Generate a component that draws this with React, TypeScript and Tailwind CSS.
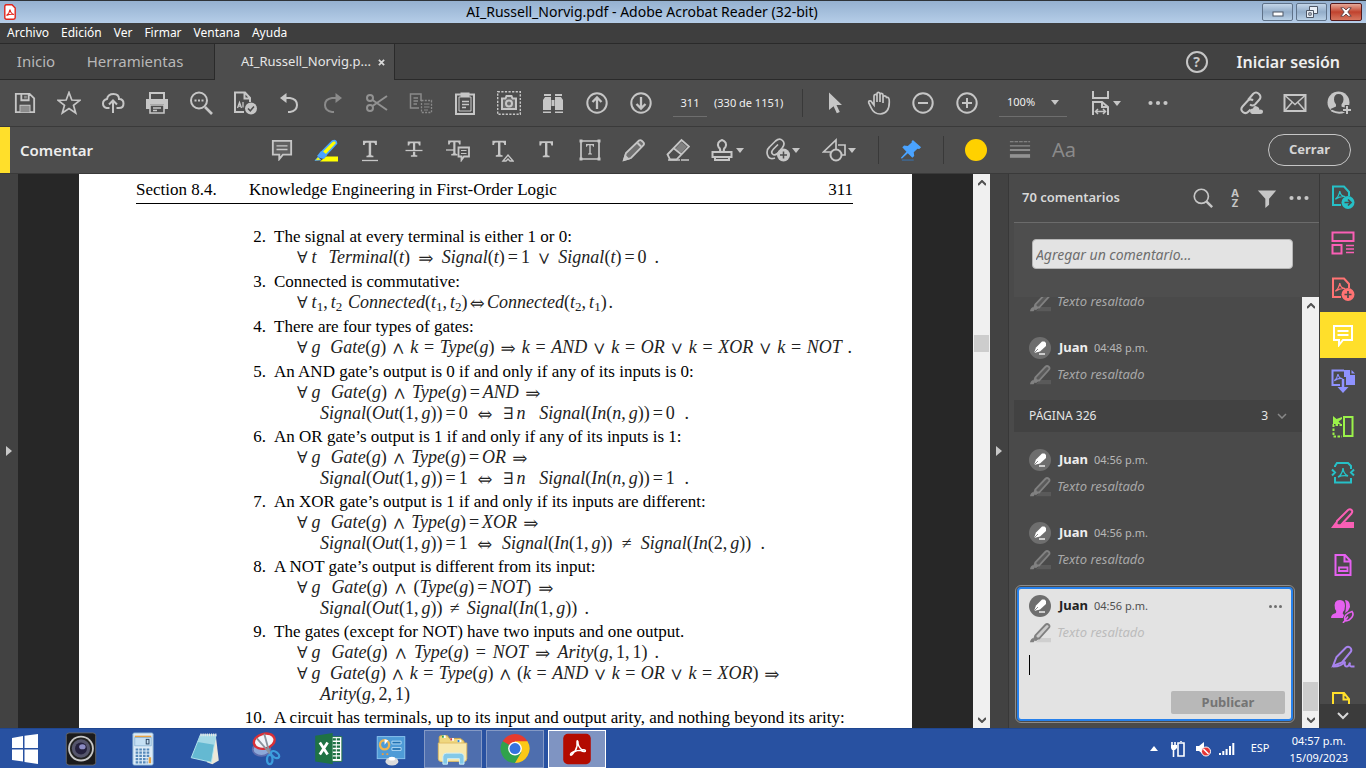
import React from "react";

type Kids = { children?: React.ReactNode };

function Ico({ children, className = "size-6" }: Kids & { className?: string }) {
  return (
    <svg viewBox="0 0 24 24" className={"shrink-0 " + className} fill="none" stroke="currentColor" strokeWidth="2" aria-hidden="true">
      {children}
    </svg>
  );
}

function Btn({ label, children, className = "w-11" }: Kids & { label: string; className?: string }) {
  return (
    <button type="button" aria-label={label} className={"flex h-9 shrink-0 items-center justify-center " + className}>
      {children}
    </button>
  );
}

function Caret() {
  return (
    <svg viewBox="0 0 8 5" className="h-[5px] w-2 shrink-0" aria-hidden="true">
      <path d="M0 0h8L4 5z" fill="#c6c6c6" />
    </svg>
  );
}

function Divider() {
  return <div className="h-7 w-px shrink-0 bg-[#393939]" />;
}

const glyphT = "M4 2h16v5h-2q0-2.800-2-2.800h-2.600V18q0 1.200 2.600 1.200V21h-8v-1.800q2.600 0 2.600-1.200V4.200H8q-2 0-2 2.800H4z";
const acroMark = "M7 17q4-3 5-9 1 6 6 6-5-1-11 3z";

function Highlighter({ base = "currentColor" }: { base?: string }) {
  return (
    <Ico className="size-[22px]">
      <path d="M7.500 22 12 17.500h12V22z" fill={base} stroke="none" />
      <path d="M7 14.500 18 3q1.700-1.700 3.500 0t0 3.500L11 18l-3.500-.2z" fill="#88888844" />
      <path d="m6 14.500 4.500 4L7.500 21l-3-2.500z" fill="currentColor" stroke="none" />
      <path d="M1 22q1-4 3.500-4.500l2 2.500L5 22z" fill="currentColor" stroke="none" />
    </Ico>
  );
}

function TitleBar() {
  return (
    <header className="flex h-[23px] shrink-0 items-center border-t border-[#2e3338] bg-linear-to-b from-[#95b1d0] to-[#b5cde8] px-1">
      <svg viewBox="0 0 12 16" className="h-4 w-3 shrink-0" aria-hidden="true">
        <path d="M1.500.8h6.500L11.200 4v9.500q0 1.700-1.700 1.700H2.500Q.8 15.200.8 13.500V2.500Q.8.8 2.500.8z" fill="#fff" stroke="#e1251b" strokeWidth="1.400" />
        <path d="M2.500 11.500q3-2 3.500-6 .5 4 4 5-3.500-.8-7.500 1z" fill="none" stroke="#e1251b" strokeWidth="1.200" />
      </svg>
      <h1 className="flex-1 pl-[6px] text-center font-['Noto_Sans'] text-sm text-black">AI_Russell_Norvig.pdf - Adobe Acrobat Reader (32-bit)</h1>
      <div className="flex gap-[3px]">
        <button type="button" aria-label="Minimizar" className="flex h-[18px] w-[31px] items-center justify-center rounded-xs border border-[#5f7289] bg-linear-to-b from-[#c3d5e8] via-[#93adc9] to-[#b9d0e6]">
          <svg viewBox="0 0 12 6" className="mt-1 h-[6px] w-3"><rect x="1" y="1" width="10" height="4" fill="#fff" stroke="#4d5665" /></svg>
        </button>
        <button type="button" aria-label="Restaurar" className="flex h-[18px] w-[31px] items-center justify-center rounded-xs border border-[#5f7289] bg-linear-to-b from-[#c3d5e8] via-[#93adc9] to-[#b9d0e6]">
          <svg viewBox="0 0 14 12" className="h-3 w-[14px]" fill="#e9eff6" stroke="#4d5665"><path d="M4.500.5h8v7h-8z" /><path d="M1.500 4.500h7v7h-7zM3.800 6.800h2.400v2.400H3.800z" /></svg>
        </button>
        <button type="button" aria-label="Cerrar ventana" className="flex h-[18px] w-8 items-center justify-center rounded-xs border border-[#541a1c] bg-linear-to-b from-[#e5a898] via-[#c0422e] to-[#d6765f]">
          <svg viewBox="0 0 12 10" className="h-[10px] w-3"><path d="M.8.800h3L6 3 8.200.8h3L7.800 5l3.400 4.200h-3L6 7 3.800 9.200h-3L4.200 5z" fill="#fff" stroke="#5a4044" strokeWidth=".9" /></svg>
        </button>
      </div>
    </header>
  );
}

const menus = ["Archivo", "Edición", "Ver", "Firmar", "Ventana", "Ayuda"];

function Tabs() {
  return (
    <div className="flex h-9 shrink-0 border-b border-[#2a2a2a] bg-[#424242]">
      <button type="button" className="w-[72px] text-[15px] text-[#b8b8b8]">Inicio</button>
      <button type="button" className="w-[142px] pr-4 text-[15px] text-[#b8b8b8]">Herramientas</button>
      <div className="-mb-px flex w-[181px] items-center justify-between border-x border-[#2a2a2a] bg-[#4d4d4d] pr-[9px] pl-[26px] text-[13px] text-[#e6e6e6]">
        <button type="button">AI_Russell_Norvig.p...</button>
        <button type="button" aria-label="Cerrar pestaña">
          <svg viewBox="0 0 8 8" className="size-[7px]"><path d="m1 1 6 6M7 1 1 7" stroke="#d8d8d8" strokeWidth="2" /></svg>
        </button>
      </div>
      <div className="ml-auto flex items-center gap-[29px] pr-[26px]">
        <button type="button" aria-label="Ayuda en línea" className="flex size-[22px] items-center justify-center rounded-full border-2 border-[#c6c6c6] text-sm font-bold text-[#c6c6c6]">?</button>
        <button type="button" className="text-base font-semibold text-[#eeeeee]">Iniciar sesión</button>
      </div>
    </div>
  );
}

function Toolbar() {
  return (
    <div className="flex h-[47px] shrink-0 items-center border-b border-[#3a3a3a] pl-[3px] text-[#c6c6c6]">
      <Btn label="Guardar"><Ico className="size-[22px]"><path d="M2 2h15l5 5v15H2zM8 2v7h8V2M7 22v-7h10v7" /><path d="M11 4h3v3h-3zM7 15h10v7H7z" fill="#8c8c8c" stroke="none" /></Ico></Btn>
      <Btn label="Favoritos"><Ico><path d="m12 1.500 2.800 7.500 8 .3-6.300 5 2.200 7.700L12 17.500 5.300 22l2.200-7.700-6.300-5 8-.3z" strokeWidth="1.700" /></Ico></Btn>
      <Btn label="Subir a la nube"><Ico><path d="M8.500 17H5.500Q2 16 2 12.500T6 8q1-5 6.500-5T18 8q4.500 0 4.500 4.500T18 17h-2.500M12 22V10M8 13.500l4-4 4 4" /></Ico></Btn>
      <Btn label="Imprimir"><Ico><path d="M5 8V2h14v6" /><path d="M1 8h22v10h-4v-5H5v5H1z" fill="currentColor" stroke="none" /><path d="M5 14h14v8H5zM8 17h8M8 19.500h4" strokeWidth="1.600" /></Ico></Btn>
      <Btn label="Buscar texto"><Ico><circle cx="10" cy="9.500" r="8" /><path d="m16 16 7 7" strokeWidth="2.600" /><path d="M5.500 9.500h2M9 9.500h2M12.500 9.500h2" /></Ico></Btn>
      <Btn label="Comprobar documento"><Ico><path d="M11 21H2V1.500h10L17 7v4M11.500 1.500V7.500H17" /><circle cx="18" cy="17.500" r="6" fill="currentColor" stroke="none" /><path d="m15 17.500 2.300 2.300L21 15.500" stroke="#4d4d4d" strokeWidth="1.500" /><path d="m4.500 17 2-5.500L8.500 17M5.200 15.200h2.700M10 11v5.500" strokeWidth="1.300" /></Ico></Btn>
      <Btn label="Deshacer"><Ico><path d="M5 7h8q7 1 7 7t-7 7h-2" /><path d="M3 7 9.500 2v10z" fill="currentColor" stroke="none" /></Ico></Btn>
      <Btn label="Rehacer"><Ico className="size-6 text-[#8a8a8a]"><path d="M19 7h-8q-7 1-7 7t7 7h2" /><path d="M21 7 14.500 2v10z" fill="currentColor" stroke="none" /></Ico></Btn>
      <Btn label="Cortar"><Ico className="size-6 text-[#929292]"><circle cx="5" cy="7" r="3" /><circle cx="5" cy="17" r="3" /><path d="M7.500 9 22 19M7.500 15 22 5" /></Ico></Btn>
      <Btn label="Copiar"><Ico className="size-6 text-[#8a8a8a]"><path d="M10 17H1.500V3H12v7M4.500 7H9M4.500 10H9M4.500 13H8" strokeWidth="1.500" /><path d="M12.500 9.500h10v12h-10z" strokeDasharray="2 1.300" strokeWidth="1.300" /><path d="M15 13h5.500M15 16h5.500M15 19h4" strokeWidth="1.200" /></Ico></Btn>
      <Btn label="Pegar"><Ico><path d="M3 3.500h18V23H3z" /><path d="M6 6h12v14H6z" strokeWidth="1" /><path d="M7.500 1.500h9V6h-9z" fill="currentColor" stroke="none" /><path d="M9 10.500h7M9 13.500h7M9 16.500h4" strokeWidth="1.300" /></Ico></Btn>
      <Btn label="Instantánea"><Ico><path d="M.7.700h22.600v22.600H.7z" strokeWidth="1.400" strokeDasharray="2.200 1.400" /><path d="M5 7.500h3.500l1-2.500h5l1 2.500H19V18H5z" fill="#6a6a6a" /><circle cx="12" cy="12.500" r="3" fill="#6a6a6a" /></Ico></Btn>
      <Btn label="Buscar"><Ico><path d="M3 3h7v2H3zM14 3h7v2h-7zM2 9l2-3h6v13H2zM22 9l-2-3h-6v13h8zM10.500 9h3v6h-3zM2 20.500h8V22H2zM14 20.500h8V22h-8z" fill="currentColor" stroke="none" /></Ico></Btn>
      <Btn label="Página anterior"><Ico><circle cx="12" cy="12" r="9.700" /><path d="M12 18V7M7.500 11 12 6.500l4.500 4.500" strokeWidth="2.300" /></Ico></Btn>
      <Btn label="Página siguiente"><Ico><circle cx="12" cy="12" r="9.700" /><path d="M12 6v11M7.500 13l4.500 4.500 4.500-4.500" strokeWidth="2.300" /></Ico></Btn>
      <div className="flex w-[139px] items-center pl-[10px] text-[11px] text-[#f0f0f0]">
        <input aria-label="Página" defaultValue="311" className="h-7 w-[34px] border-b border-[#6e6e6e] bg-transparent text-center" />
        <span className="pl-[7px] whitespace-nowrap">(330 de 1151)</span>
      </div>
      <Divider />
      <div className="w-[10px]" />
      <Btn label="Selección"><Ico><path d="M6 1.500 19 14h-5.500l3.300 7-3 1.300-3.200-7L6 19z" fill="currentColor" stroke="none" /></Ico></Btn>
      <Btn label="Mano"><Ico><path d="M7 14V5q0-1.700 1.500-1.700T10 5v6V3q0-1.700 1.500-1.700T13 3v8V4q0-1.700 1.500-1.700T16 4v8V6.500q0-1.600 1.500-1.600T19.500 6.500q3-1 2.800 4.500 0 11.500-9 12-6.500 0-9-6L1.800 12q-.5-2 1-2.200t2.200 1.700z" strokeWidth="1.700" /></Ico></Btn>
      <Btn label="Alejar"><Ico><circle cx="12" cy="12" r="9.700" /><path d="M7 12h10" /></Ico></Btn>
      <Btn label="Acercar"><Ico><circle cx="12" cy="12" r="9.700" /><path d="M7 12h10M12 7v10" /></Ico></Btn>
      <button type="button" className="ml-[10px] flex h-7 w-[68px] items-center justify-between border-b border-[#6e6e6e] pr-2 pl-2 text-[11px] text-[#f0f0f0]">100%<Caret /></button>
      <button type="button" aria-label="Ajustar ancho" className="ml-[22px] flex items-center gap-1">
        <Ico className="-mr-1 size-6"><path d="M4 0v7h15V0M4 24V11h9l6 5v8M13 11v5h6" /><path d="M7 20.500h9M9 18l-2.500 2.500L9 23M14 18l2.500 2.500L14 23" strokeWidth="1.500" /></Ico>
        <Caret />
      </button>
      <Btn label="Más herramientas" className="ml-[15px] w-11"><Ico className="size-5"><g fill="currentColor" stroke="none"><circle cx="3" cy="12" r="2.500" /><circle cx="12" cy="12" r="2.500" /><circle cx="21" cy="12" r="2.500" /></g></Ico></Btn>
      <div className="ml-auto flex pr-[5px]">
        <Btn label="Compartir vínculo"><Ico><path d="m9 9 5-6q3-3 6 0t0 6l-4 4.500q-2.500 2-5 0M14 9.500q-2.500-2.500-5.500.5l-5 5.500q-2.500 3 .3 5.500t5.700-.5l2-2" /><path d="M13 23q-2-.5-2-3t3-2.500q1-3.500 4-2t2 3q4-.5 4 2t-3 2.500z" fill="currentColor" stroke="none" /></Ico></Btn>
        <Btn label="Enviar por correo"><Ico><path d="M1.500 4h21v16h-21z" /><path d="m2 4.500 10 9 10-9M2 19.500l7-8M22 19.500l-7-8" strokeWidth="1.500" /></Ico></Btn>
        <Btn label="Agregar personas">
          <Ico>
            <circle cx="11.500" cy="11.500" r="11" fill="currentColor" stroke="none" />
            <path d="M11.500 3q5 0 5 5.500 0 3-2 5v2l5.500 2.500-5 5h-7L3.500 18 9 15.500v-2q-2-2-2-5Q7 3 11.500 3z" fill="#4d4d4d" stroke="none" />
            <path d="M4.500 19.500q7 4 13 1" strokeWidth="2" />
            <path d="M20 14v9.500M15.500 18.800h8.500" stroke="#4d4d4d" strokeWidth="4.500" />
            <path d="M20 15v8M16 19h8" />
          </Ico>
        </Btn>
      </div>
    </div>
  );
}

function CommentBar() {
  return (
    <div className="flex h-[47px] shrink-0 items-center border-b border-[#3a3a3a] text-[#c6c6c6]">
      <div className="h-full w-[10px] bg-[#ffdf2b]" />
      <h2 className="w-[250px] pl-[10px] text-[15px] font-semibold text-[#eeeeee]">Comentar</h2>
      <Btn label="Nota adhesiva"><Ico className="size-[22px]"><path d="M2 2h20v15h-9l-4 5v-5H2z" fill="#606060" /><path d="M6 7.500h12M6 11.500h12" strokeWidth="1.600" /></Ico></Btn>
      <Btn label="Resaltar"><Ico><path d="M6 23.500 12 18.500h12v5z" fill="#ffff00" stroke="none" /><path d="M8 13.500 18.500 3q4-1.500 4 2.500L12 17z" fill="#ffff00" stroke="#4aa3ff" strokeWidth="1.600" /><path d="m7 13 6 4-3 4-4-1-3-2z" fill="#4aa3ff" stroke="none" /><path d="M1 22.500 4 19l3 3z" fill="#ffff00" stroke="#4aa3ff" strokeWidth=".7" /></Ico></Btn>
      <Btn label="Subrayar"><Ico><path transform="translate(1.500 1) scale(.87)" d={glyphT} fill="currentColor" stroke="none" /><path d="M4 22.500h16" strokeWidth="1.300" /></Ico></Btn>
      <Btn label="Tachar"><Ico><path transform="translate(2.500 2) scale(.8)" d={glyphT} fill="currentColor" stroke="none" /><path d="M3 13h18" strokeWidth="1.500" stroke="#4d4d4d" /><path d="M3.500 12.500h17" strokeWidth="1.300" /></Ico></Btn>
      <Btn label="Reemplazar texto"><Ico><path transform="translate(-1 1) scale(.78)" d={glyphT} fill="currentColor" stroke="none" /><path d="M0 12h8" strokeWidth="1.300" /><path d="M12.500 9.500h10.500v9h-5L15.500 22v-3.500h-3z" fill="#4d4d4d" strokeWidth="1.800" /><path d="M15 12.500h5.500M15 15.500h5.500" strokeWidth="1.200" /></Ico></Btn>
      <Btn label="Insertar texto"><Ico><path transform="translate(-1 1) scale(.85)" d={glyphT} fill="currentColor" stroke="none" /><path d="m13 23 5-6 5 6h-3l-2-2-2 2z" fill="#4d4d4d" strokeWidth="1.400" /></Ico></Btn>
      <Btn label="Agregar comentario de texto"><Ico><path transform="translate(2 1.500) scale(.85)" d={glyphT} fill="currentColor" stroke="none" /></Ico></Btn>
      <Btn label="Cuadro de texto"><Ico><path d="M3 3h18v18H3z" strokeWidth="1.700" /><path transform="translate(6 5) scale(.5 .55)" d={glyphT} fill="currentColor" stroke="none" /><path d="M1.500 1.500h3v3h-3zM19.500 1.500h3v3h-3zM1.500 19.500h3v3h-3zM19.500 19.500h3v3h-3z" fill="currentColor" stroke="none" /></Ico></Btn>
      <Btn label="Lápiz"><Ico><path d="m2 22 2-7L17 2.500q1.500-1 3 .5l1.200 1.200q1.500 1.500.3 3L9 20z" fill="#707070" strokeWidth="1.800" /><path d="m2 22 1.300-4 2.700 2.700zM15.500 5 19 8.500" fill="currentColor" /></Ico></Btn>
      <Btn label="Borrador"><Ico><path d="m1.500 16.500 14-14.500 7.500 6.500-12.500 13H4z" strokeWidth="1.800" /><path d="m9.500 10.500 6-6.500 5.500 4.700-5.500 6.300z" fill="#808080" stroke="none" /><path d="M8 10.500 15.500 16.500" strokeWidth="1.800" /><path d="M2 22h21" strokeWidth="1.500" strokeDasharray="12 1" /></Ico></Btn>
      <button type="button" aria-label="Sello" className="flex w-14 items-center gap-[2px] pl-[10px]"><Ico><path d="M10 14q1-3-1.500-5-2-5 3.500-7 5.500 2 3.500 7-2.500 2-1.500 5M2.500 14h19v5h-19zM5 19v3h14v-3" /></Ico><Caret /></button>
      <button type="button" aria-label="Adjuntar archivo" className="flex w-14 items-center gap-[2px] pl-[10px]"><Ico><path d="M9 20q-6 2-7.500-3t2-8l6-6q4-3.500 7-.5t0 7l-5 6q-3 2.500-5 .5t1-5L12 6.500" strokeWidth="1.700" /><circle cx="17.500" cy="17" r="6.500" fill="currentColor" stroke="none" /><path d="M17.500 13.500v7M14 17h7" stroke="#4d4d4d" strokeWidth="1.500" /></Ico><Caret /></button>
      <button type="button" aria-label="Dibujar formas" className="mr-[10px] flex w-14 items-center gap-[2px] pl-[10px]"><Ico><path d="M9 14H1.500L14 2v10M16 7h7v10h-3" strokeWidth="1.700" /><circle cx="14" cy="17" r="5.500" /></Ico><Caret /></button>
      <Divider />
      <div className="w-[10px]" />
      <Btn label="Fijar herramienta"><Ico className="size-[22px] text-[#4aa3ff]"><path d="m14 1 9 8-2 2-2-.5-4 4 .5 4-2 2-5-5-6.500 6-1-1 6-6.500-4.500-5 2-2 4 .5 4.500-4L12.500 3z" fill="currentColor" stroke="none" /><path d="M2 23h13" stroke="#40658a" strokeWidth="1.800" /></Ico></Btn>
      <div className="w-[10px]" />
      <Divider />
      <Btn label="Color" className="ml-[10px] w-11"><span className="size-[22px] rounded-full bg-[#ffd100]" /></Btn>
      <Btn label="Grosor de línea"><Ico className="size-[22px] text-[#919191]"><path d="M1 3h22" strokeWidth="1.200" strokeDasharray="4 1" /><path d="M1 7.500h22" strokeWidth="1.300" /><path d="M1 12h22" strokeWidth="2" /><path d="M1 18.500h22" strokeWidth="4" /></Ico></Btn>
      <Btn label="Propiedades de texto"><span className="text-xl text-[#8a8a8a]">Aa</span></Btn>
      <button type="button" className="mr-[15px] ml-auto h-8 w-[83px] rounded-full border border-[#c6c6c6] text-[13px] font-bold text-[#d5d5d5]">Cerrar</button>
    </div>
  );
}

type Formula = { w: string; t: string };
type Rule = { n: string; text: string; f: Formula[] };

const rules: Rule[] = [
  { n: "2.", text: "The signal at every terminal is either 1 or 0:", f: [{ w: "ml-[22px] w-[363px]", t: "∀t Terminal(t) ⇒ Signal(t)=1 ∨ Signal(t)=0 ." }] },
  { n: "3.", text: "Connected is commutative:", f: [{ w: "ml-[22px] w-[317px]", t: "∀t_1,t_2 Connected(t_1,t_2) ⇔ Connected(t_2,t_1) ." }] },
  { n: "4.", text: "There are four types of gates:", f: [{ w: "ml-[22px] w-[556px]", t: "∀g Gate(g) ∧ k = Type(g) ⇒ k = AND ∨ k = OR ∨ k = XOR ∨ k = NOT ." }] },
  { n: "5.", text: "An AND gate’s output is 0 if and only if any of its inputs is 0:", f: [{ w: "ml-[22px] w-[245px]", t: "∀g Gate(g) ∧ Type(g)=AND ⇒" }, { w: "ml-[46px] w-[369px]", t: "Signal(Out(1,g))=0 ⇔ ∃n Signal(In(n,g))=0 ." }] },
  { n: "6.", text: "An OR gate’s output is 1 if and only if any of its inputs is 1:", f: [{ w: "ml-[22px] w-[232px]", t: "∀g Gate(g) ∧ Type(g)=OR ⇒" }, { w: "ml-[46px] w-[369px]", t: "Signal(Out(1,g))=1 ⇔ ∃n Signal(In(n,g))=1 ." }] },
  { n: "7.", text: "An XOR gate’s output is 1 if and only if its inputs are different:", f: [{ w: "ml-[22px] w-[243px]", t: "∀g Gate(g) ∧ Type(g)=XOR ⇒" }, { w: "ml-[46px] w-[445px]", t: "Signal(Out(1,g))=1 ⇔ Signal(In(1,g)) ≠ Signal(In(2,g)) ." }] },
  { n: "8.", text: "A NOT gate’s output is different from its input:", f: [{ w: "ml-[22px] w-[258px]", t: "∀g Gate(g) ∧ (Type(g)=NOT) ⇒" }, { w: "ml-[46px] w-[269px]", t: "Signal(Out(1,g)) ≠ Signal(In(1,g)) ." }] },
  { n: "9.", text: "The gates (except for NOT) have two inputs and one output.", f: [{ w: "ml-[22px] w-[363px]", t: "∀g Gate(g) ∧ Type(g) = NOT ⇒ Arity(g,1,1) ." }, { w: "ml-[22px] w-[484px]", t: "∀g Gate(g) ∧ k = Type(g) ∧ (k = AND ∨ k = OR ∨ k = XOR) ⇒" }, { w: "ml-[46px] w-[91px]", t: "Arity(g,2,1)" }] },
  { n: "10.", text: "A circuit has terminals, up to its input and output arity, and nothing beyond its arity:", f: [] },
];

function Token({ text }: { text: string }) {
  const parts = text.match(/_\d|[A-Za-z]+|[^A-Za-z_]/g) ?? [];
  const quantified = /^[∀∃]/.test(text);
  return (
    <span className={quantified ? "pr-1" : ""}>
      {parts.map((p, i) => {
        if (p[0] === "_") return <sub key={i} className="bottom-[-3px] text-[13px]">{p[1]}</sub>;
        if (/[A-Za-z]/.test(p)) return <i key={i}>{p}</i>;
        if (/[∀∃]/.test(p)) return <span key={i} className="mr-[3px] font-['DejaVu_Math_TeX_Gyre','DejaVu_Sans'] text-base leading-none">{p}</span>;
        if (/[⇒⇔∧∨]/.test(p)) return <span key={i} className="font-['DejaVu_Math_TeX_Gyre','DejaVu_Sans'] text-base leading-none">{p}</span>;
        if (p === ",") return <span key={i} className="mr-[3px]">{p}</span>;
        if (p === "=" && parts.length > 1) return <span key={i} className="mx-[3px]">{p}</span>;
        return <span key={i}>{p}</span>;
      })}
    </span>
  );
}

function PdfPage() {
  return (
    <article className="min-w-0 flex-1 overflow-hidden bg-white pr-[59px] pl-[57px] font-['Liberation_Serif',serif] text-[17px] text-black">
      <div className="flex h-[30px] items-center border-b border-black pt-[3px] whitespace-nowrap">
        <span className="w-[113px]">Section 8.4.</span>
        <span>Knowledge Engineering in First-Order Logic</span>
        <span className="ml-auto">311</span>
      </div>
      <ol className="pt-[22px] pl-[104px]">
        {rules.map((r) => (
          <li key={r.n} className={r.f.length > 1 ? "flex pb-[2px]" : "flex pb-[3px]"}>
            <span className="w-[26px] shrink-0 text-right leading-[21px]">{r.n}</span>
            <div className="w-0 pl-2 whitespace-nowrap">
              <p className="leading-[21px]">{r.text}</p>
              {r.f.map((f, i) => (
                <p key={i} className={"flex h-[21px] items-baseline justify-between text-lg leading-[21px] text-[#222222] " + f.w}>
                  {f.t.split(" ").map((t, j) => <Token key={j} text={t} />)}
                </p>
              ))}
            </div>
          </li>
        ))}
      </ol>
    </article>
  );
}

function Chevron({ up = false }: { up?: boolean }) {
  return (
    <svg viewBox="0 0 8 6" className="h-[6px] w-2" fill="none" stroke="#505050" strokeWidth="2" aria-hidden="true">
      <path d={up ? "m0 5 4-4 4 4" : "m0 1 4 4 4-4"} />
    </svg>
  );
}

function ScrollBar({ track, thumb, label }: { track: string; thumb: string; label: string }) {
  return (
    <div className="flex w-[17px] shrink-0 flex-col items-center bg-[#f0f0f0]">
      <button type="button" aria-label={label + " arriba"} className="flex h-[17px] w-full items-center justify-center"><Chevron up /></button>
      <div className={"flex min-h-0 w-full flex-1 flex-col px-px " + track}><div className={"w-full bg-[#cdcdcd] " + thumb} /></div>
      <button type="button" aria-label={label + " abajo"} className="flex h-[17px] w-full items-center justify-center"><Chevron /></button>
    </div>
  );
}

function Gutter({ label }: { label: string }) {
  return (
    <button type="button" aria-label={label} className="flex w-[18px] shrink-0 items-center justify-center bg-[#424242]">
      <svg viewBox="0 0 6 10" className="h-[10px] w-[6px]"><path d="M0 0v10l6-5z" fill="#c8c8c8" /></svg>
    </button>
  );
}

function HighlightRow({ light = false }: { light?: boolean }) {
  return (
    <div className="flex h-8 items-center">
      <span className={light ? "flex text-[#808080]" : "flex text-[#818181]"}><Highlighter base={light ? "#cfcfcf" : "#5a5a5a"} /></span>
      <i className={light ? "pl-[6px] text-[13px] text-[#bcbcbc]" : "pl-[6px] text-[13px] text-[#a8a8a8]"}>Texto resaltado</i>
    </div>
  );
}

function Comment({ time, light = false }: { time: string; light?: boolean }) {
  return (
    <div className="pl-[15px]">
      <div className="flex h-[22px] items-center">
        <span className="flex size-[22px] items-center justify-center rounded-full bg-[#6e6e6e]">
          <svg viewBox="0 0 14 14" className="size-[14px]"><path d="m1 12 2-5.500 6-6h2.500l1.500 1.500V5L7 10.500z" fill="#fff" /><path d="m1 12 4-4" stroke="#6e6e6e" strokeWidth=".8" /><path d="M6 13h6" stroke="#fff" strokeWidth="1.300" /></svg>
        </span>
        <b className={light ? "pl-2 text-[13px] text-[#222222]" : "pl-2 text-[13px] text-[#eeeeee]"}>Juan</b>
        <span className={light ? "pl-[6px] text-[11px] text-[#505050]" : "pl-[6px] text-[11px] text-[#b8b8b8]"}>{time}</span>
        {light && (
          <button type="button" aria-label="Opciones del comentario" className="mr-[9px] ml-auto flex gap-[2px]">
            <span className="size-[3px] rounded-full bg-[#6e6e6e]" /><span className="size-[3px] rounded-full bg-[#6e6e6e]" /><span className="size-[3px] rounded-full bg-[#6e6e6e]" />
          </button>
        )}
      </div>
      <HighlightRow light={light} />
    </div>
  );
}

function CommentPanel() {
  return (
    <aside className="flex w-[312px] shrink-0 flex-col border-x border-[#383838] bg-[#4a4a4a] pl-[5px]">
      <div className="flex h-[49px] shrink-0 items-center border-b border-[#6b6b6b] pr-1 pl-2 text-[#c6c6c6]">
        <h3 className="flex-1 text-[13px] font-semibold text-[#d8d8d8]">70 comentarios</h3>
        <Btn label="Buscar comentarios" className="w-8"><Ico className="size-5"><circle cx="10" cy="10" r="8.500" /><path d="m16 16 7 7" strokeWidth="3" /></Ico></Btn>
        <Btn label="Ordenar comentarios" className="w-8 flex-col text-[11px] leading-none font-bold"><span className="h-[10px] leading-[10px]">A</span><span className="h-[10px] leading-[10px]">Z</span></Btn>
        <Btn label="Filtrar comentarios" className="w-8"><Ico className="size-5"><path d="M1 3h22l-8.500 10v7L10 24V13z" fill="currentColor" stroke="none" /></Ico></Btn>
        <Btn label="Más opciones" className="w-8"><Ico className="size-5"><g fill="currentColor" stroke="none"><circle cx="3" cy="12" r="2.500" /><circle cx="12" cy="12" r="2.500" /><circle cx="21" cy="12" r="2.500" /></g></Ico></Btn>
      </div>
      <div className="h-[74px] shrink-0 bg-[#4e4e4e] pt-4 pr-[26px] pl-[18px]">
        <input aria-label="Agregar un comentario" placeholder="Agregar un comentario..." className="h-[30px] w-full rounded-sm border border-[#b5b5b5] bg-[#e3e3e3] px-[3px] text-sm italic placeholder:text-[#6e6e6e]" />
      </div>
      <div className="flex min-h-0 flex-1">
        <div className="flex min-w-0 flex-1 flex-col justify-end overflow-hidden">
          <div className="h-[41px] shrink-0 pl-[15px]"><HighlightRow /></div>
          <div className="h-[73px] shrink-0 pt-[10px]"><Comment time="04:48 p.m." /></div>
          <button type="button" className="mb-[7px] flex h-8 shrink-0 items-center bg-[#424242] pr-[15px] pl-[15px] text-xs text-[#e6e6e6]">
            <span className="flex-1 text-left">PÁGINA 326</span>
            <span className="pr-[9px]">3</span>
            <svg viewBox="0 0 10 6" className="h-[6px] w-[10px]" fill="none" stroke="#888" strokeWidth="1.500"><path d="m1 1 4 4 4-4" /></svg>
          </button>
          <div className="h-[73px] shrink-0 pt-[10px]"><Comment time="04:56 p.m." /></div>
          <div className="h-[73px] shrink-0 pt-[10px]"><Comment time="04:56 p.m." /></div>
          <div className="mr-[7px] mb-[5px] ml-px shrink-0 rounded-md border border-[#8c8c8c] p-px">
            <div className="h-[134px] rounded-[4px] border-2 border-[#2680eb] bg-[#e3e3e3] pt-[6px]">
              <div className="-ml-[5px]"><Comment time="04:56 p.m." light /></div>
              <input aria-label="Respuesta" className="mt-[6px] ml-[10px] block h-5 w-[240px] border-l border-black bg-transparent" />
              <button type="button" className="mt-4 mr-[6px] ml-auto block h-[23px] w-[114px] rounded-xs bg-[#b8b8b8] text-[13px] font-bold text-[#747474]">Publicar</button>
            </div>
          </div>
        </div>
        <ScrollBar label="Comentarios" track="justify-end" thumb="h-[29px]" />
      </div>
    </aside>
  );
}

function RailBtn({ label, children, className }: Kids & { label: string; className: string }) {
  return <button type="button" aria-label={label} className={"flex h-[46px] w-full shrink-0 items-center justify-center " + className}><Ico>{children}</Ico></button>;
}

function ToolRail() {
  return (
    <nav className="flex w-[46px] shrink-0 flex-col bg-[#4a4a4a]">
      <div className="min-h-0 flex-1 overflow-hidden">
        <RailBtn label="Exportar PDF" className="text-[#26c0c7]"><path d="M10 20H2V1.500h11L18 7v4" /><path transform="translate(-2 -1) scale(.9)" d={acroMark} strokeWidth="1.300" /><circle cx="17" cy="17.500" r="6.500" fill="currentColor" stroke="none" /><path d="M13.500 17.500h6M17 14.500l3 3-3 3" stroke="#4a4a4a" strokeWidth="1.700" /></RailBtn>
        <RailBtn label="Organizar páginas" className="text-[#fa5fb5]"><path d="M1.500 1.500h21V10h-21zM1.500 14h9v8.500h-9z" /><path d="M15 14.500h8M15 18h8M15 21.500h8" strokeWidth="1.400" /></RailBtn>
        <RailBtn label="Crear PDF" className="text-[#ff7373]"><path d="M10 20H2V1.500h11L18 7v4" /><path transform="translate(-2 -1) scale(.9)" d={acroMark} strokeWidth="1.300" /><circle cx="17" cy="17.500" r="6.500" fill="currentColor" stroke="none" /><path d="M13.500 17.500h7M17 14v7" stroke="#4a4a4a" strokeWidth="1.700" /></RailBtn>
        <RailBtn label="Comentar" className="bg-[#ffdf2b] text-white"><path d="M3 3h18v14h-9l-4 5v-5H3z" /><path d="M6.500 8h11M6.500 12h11" /></RailBtn>
        <RailBtn label="Combinar archivos" className="text-[#8f92ff]"><path d="M9 16H1.500V1.500H13" /><path d="M13 1h6v5h5v10h-9V8h-2z" fill="currentColor" stroke="none" /><path d="M20.500 1 24 4.500h-3.500z" fill="currentColor" stroke="none" /><path transform="translate(-2 -1) scale(.75)" d={acroMark} strokeWidth="1.500" /><path d="M12 10v9" strokeWidth="2.500" /><path d="M6.500 18h11L12 24z" fill="currentColor" stroke="none" /></RailBtn>
        <RailBtn label="Organizar" className="text-[#9bf24a]"><path d="M13 2h8.500v19H13z" /><path d="M11 10H2.500v11.500H11" strokeDasharray="2.500 1.500" /><path d="M2 1v8h8L7.500 6.500 11 4V2L5.500 4z" fill="currentColor" stroke="none" /></RailBtn>
        <RailBtn label="Comprimir PDF" className="text-[#26c0c7]"><path d="M4 6V5l2-3h11l3 3v3M4 16v5.500h16V17M1 8.500l3 3-3 3M23 8.500l-3 3 3 3" /><path d="M7 16q4.500-3 5-9 .5 6 5 8-5-1-10 1z" strokeWidth="1.400" /></RailBtn>
        <RailBtn label="Censurar" className="text-[#fa5fb5]"><path d="M6 14 17 3q2-1.500 3.500 0t0 3.500L10 18l-5 .5z" /><path d="M0 21l4.500-6 4 4L14 15h9v6z" fill="currentColor" stroke="none" /></RailBtn>
        <RailBtn label="Preparar formulario" className="text-[#e561f0]"><path d="M4.500 2H14l5.500 6v14h-15zM13.500 2v6.500h6" /><path d="M8 14.500h8.500V18H8z" strokeWidth="1.800" /></RailBtn>
        <RailBtn label="Solicitar firmas" className="text-[#e561f0]"><path d="M9 1q5 0 5 6 0 4-2 6-1 2 1 3l-1 3H0q0-4 5-5 1-2-1-4-2-9 5-9zM14 1q5 0 5 7l-2 4-3 2q2-7 0-13z" fill="currentColor" stroke="none" /><path d="M14 22q-2-7 7-9.500 3 4-3 8.500-2 1-4 1zm-2 2 5-6.500" strokeWidth="1.600" /></RailBtn>
        <RailBtn label="Rellenar y firmar" className="text-[#a883ee]"><path d="m2 21 3.500-9L15 2.500q2-1.500 4 0t1 4l-9 11z" /><path d="M2 21.500q9 0 12-5-1 5 1.500 5t3.500-4q-1 4 1.500 4l3 0" /></RailBtn>
        <RailBtn label="Enviar para comentarios" className="text-[#ffdf2b]"><path d="M9 22H2V2h11l5 6v5M12.500 2v6.500H18" /><path d="M12 14h11v8H12z" /></RailBtn>
      </div>
      <button type="button" aria-label="Más herramientas del panel" className="flex h-6 shrink-0 items-center justify-center bg-[#3b3b3b]">
        <svg viewBox="0 0 12 8" className="h-2 w-3" fill="none" stroke="#d8d8d8" strokeWidth="2"><path d="m1 1 5 5 5-5" /></svg>
      </button>
    </nav>
  );
}

function TaskBtn({ label, className = "border-transparent", children }: Kids & { label: string; className?: string }) {
  return (
    <button type="button" aria-label={label} className={"flex h-[38px] w-[58px] items-center justify-center border " + className}>
      <svg viewBox="-1 -2 34 37" className="h-[34px] w-8" aria-hidden="true">{children}</svg>
    </button>
  );
}

function TaskBar() {
  return (
    <footer className="flex h-10 shrink-0 items-center border-t border-[#1f4690] bg-[#2851a1] text-white">
      <button type="button" aria-label="Inicio de Windows" className="flex w-[50px] items-center justify-center">
        <svg viewBox="0 0 26 30" className="h-[30px] w-[26px]" fill="#fff"><path d="M0 4 11 2v12H0zM12.500 1.800 26 0v14H12.500zM0 15.500h11v12L0 26zM12.500 15.500H26V30l-13.500-2z" /></svg>
      </button>
      <div className="flex gap-1 pl-[2px]">
        <TaskBtn label="Cámara">
          <rect x="0" y="-1" width="32" height="35" rx="3" fill="#1b1b1d" stroke="#666" />
          <circle cx="16" cy="16" r="14" fill="#c8c8c8" /><circle cx="16" cy="16" r="12" fill="#222" /><circle cx="16" cy="16" r="10" fill="#55556c" /><circle cx="16" cy="16" r="6.500" fill="#24203d" /><ellipse cx="17.500" cy="14" rx="3.500" ry="2.800" fill="#8c8cc4" />
        </TaskBtn>
        <TaskBtn label="Calculadora">
          <rect x="5" y="-1" width="22" height="35" rx="1.500" fill="#dcebf7" stroke="#87aed0" /><path d="M7 2h18v2H7z" fill="#e7a344" /><path d="M7 4h18v9H7z" fill="#c5e0f4" stroke="#78a8cf" strokeWidth=".7" /><rect x="19.500" y="6" width="3" height="5" fill="none" stroke="#263e5a" />
          <g stroke="#5589ba" strokeWidth="2.300" strokeDasharray="2.800 1.200"><path d="M8 17h15M8 20.500h15M8 24h15M8 27.500h13M8 31h13" /></g><path d="M23.500 25.500v6.500" stroke="#e7a344" strokeWidth="2.600" />
        </TaskBtn>
        <TaskBtn label="Bloc de notas">
          <path d="M28 4l3 25-7 4-6-2z" fill="#ece7d8" /><path d="M11 1h17l-5 30L1 26z" fill="#64b9d2" stroke="#b7e7f0" /><path d="M11 1h17l-2 11L8 9z" fill="#a5d9e6" /><path d="M11 1h18" stroke="#e8e8e8" strokeWidth="3" strokeDasharray="1.300 1" />
        </TaskBtn>
        <TaskBtn label="Recortes">
          <ellipse cx="10" cy="17" rx="9.500" ry="7" fill="#8da8d8" stroke="#606eae" strokeWidth="2" /><ellipse cx="13" cy="8" rx="11.500" ry="8" fill="#f3f6fb" stroke="#d83038" strokeWidth="2.600" transform="rotate(-15 13 8)" />
          <path d="m5 5 15 17M13 0l6 22" stroke="#8b949d" strokeWidth="2" /><ellipse cx="25" cy="22" rx="5" ry="3" fill="none" stroke="#3d9ddd" strokeWidth="2.500" transform="rotate(35 24 22)" /><ellipse cx="19" cy="28" rx="3" ry="5" fill="none" stroke="#3d9ddd" strokeWidth="2.500" />
        </TaskBtn>
        <TaskBtn label="Excel">
          <path d="M18 3h12v27H18z" fill="#fff" stroke="#1f7244" /><path d="M20 6h8M20 10h8M20 14h8M20 18h8M20 22h8M20 26h8" stroke="#1f7244" strokeWidth="2.500" /><path d="M24 4v25" stroke="#fff" /><path d="m1 2 19-3v34L1 30z" fill="#1f7244" /><path d="m6 9.500 8.500 13M14.500 9.500 6 22.500" stroke="#fff" strokeWidth="3" />
        </TaskBtn>
        <TaskBtn label="Panel de control">
          <rect x="1" y="3" width="30" height="24" fill="#4e9bd7" stroke="#8bc5ef" /><circle cx="9" cy="12" r="5" fill="none" stroke="#f0b550" strokeWidth="2.500" /><path d="M9 12V6l4 1z" fill="#fff" /><path d="M17 8h10v3H17zM17 15h10v3H17z" fill="#2170b0" stroke="#bce2fb" /><path d="M6 22h2M11 22h2" stroke="#ed9c3c" strokeWidth="2" /><ellipse cx="17" cy="30" rx="7" ry="4.500" fill="#dcdcdc" /><ellipse cx="17" cy="27" rx="3.500" ry="2" fill="#fff" />
        </TaskBtn>
        <TaskBtn label="Explorador de archivos" className="border-[#8499c5] bg-[#4e6eae]">
          <path d="M1 4q0-2 2-2h7l2 3h12l4 3v10H1z" fill="#efd77f" stroke="#d5aa45" /><path d="M4 3h4M13 6h4M21 8h4" stroke="#fff" strokeWidth="3" /><path d="M4 3h2" stroke="#35a347" strokeWidth="2.500" /><path d="M13 6h2" stroke="#d44332" strokeWidth="2.500" /><path d="M21 8h2" stroke="#2f88d6" strokeWidth="2.500" /><path d="M0 10h31v17q0 3-3 3H3q-3 0-3-3z" fill="#f8e9ad" stroke="#dfbb63" /><path d="M5 33v-8q0-4 4-4h14q5 0 5 4v8h-5v-6H10v6z" fill="#83c9e8" stroke="#d1f0f9" />
        </TaskBtn>
        <TaskBtn label="Google Chrome" className="border-[#8499c5] bg-[#4e6eae]">
          <path d="M16 16 2.500 8a15.700 15.700 0 0 1 27.100 0z" fill="#e63b2e" /><path d="M16 16 2.500 8A15.700 15.700 0 0 0 16 31.700L23 20z" fill="#30a24c" /><path d="M16 16V8h13.600A15.700 15.700 0 0 1 16 31.700l7-12z" fill="#fbc916" /><circle cx="16" cy="16" r="7.500" fill="#fff" /><circle cx="16" cy="16" r="6" fill="#3472df" />
        </TaskBtn>
        <TaskBtn label="Adobe Acrobat" className="border-white bg-[#7f94c2]">
          <rect x="1" y="0" width="30" height="33" rx="5" fill="#b30b00" /><path d="M9 23q-1-2 5-4.500 3-5 2-10 0-2 1 0 0 5 4 8.500 5 0 4 2-2 1-5-1-4 0-7 1.500-3 4.500-4 3.500z" fill="none" stroke="#fff" strokeWidth="1.600" />
        </TaskBtn>
      </div>
      <div className="ml-auto flex items-center pr-[18px]">
        <svg viewBox="0 0 8 5" className="mr-3 h-[5px] w-2" fill="#fff"><path d="M0 5h8L4 0z" /></svg>
        <svg viewBox="0 0 16 16" className="mr-[9px] size-4" fill="none" stroke="#fff" strokeWidth="1.600"><path d="M8 2h6v13H8zM10 0h2M2 1v4M5 1v4M3.500 9v7" /><path d="M1 4h6v3L5 9H2L1 7z" fill="#fff" stroke="none" /></svg>
        <svg viewBox="0 0 16 16" className="mr-2 size-4"><path d="M1 5h3l5-4v13l-5-4H1z" fill="#fff" /><circle cx="11" cy="10.500" r="4.500" fill="#e63434" stroke="#fff" /><path d="m8.500 8 5 5" stroke="#fff" strokeWidth="1.500" /></svg>
        <svg viewBox="0 0 16 12" className="mr-4 h-3 w-4" fill="#fff"><path d="M0 10h2v2H0zM3.300 8h2v4h-2zM6.600 6h2v6h-2zM10 3h2v9h-2zM13.300 0h2v12h-2z" /></svg>
        <span className="mr-5 text-[11px]">ESP</span>
        <time className="text-center text-[11px] leading-[17px]">04:57 p.m.<br />15/09/2023</time>
      </div>
    </footer>
  );
}

export default function App() {
  return (
    <div className="flex h-screen flex-col overflow-hidden bg-[#4d4d4d] font-['Noto_Sans',sans-serif]">
      <TitleBar />
      <nav className="flex h-[21px] shrink-0 items-center gap-3 border-b border-[#2a2a2a] bg-[#3e3e3e] pl-[7px] text-xs text-white">
        {menus.map((m) => <button type="button" key={m}>{m}</button>)}
      </nav>
      <Tabs />
      <Toolbar />
      <CommentBar />
      <main className="flex min-h-0 flex-1">
        <Gutter label="Mostrar panel de navegación" />
        <div className="flex min-w-0 flex-1 bg-[#272727] px-[61px]"><PdfPage /></div>
        <ScrollBar label="Documento" track="pt-[144px]" thumb="h-[17px]" />
        <Gutter label="Ocultar panel de herramientas" />
        <CommentPanel />
        <ToolRail />
      </main>
      <TaskBar />
    </div>
  );
}
